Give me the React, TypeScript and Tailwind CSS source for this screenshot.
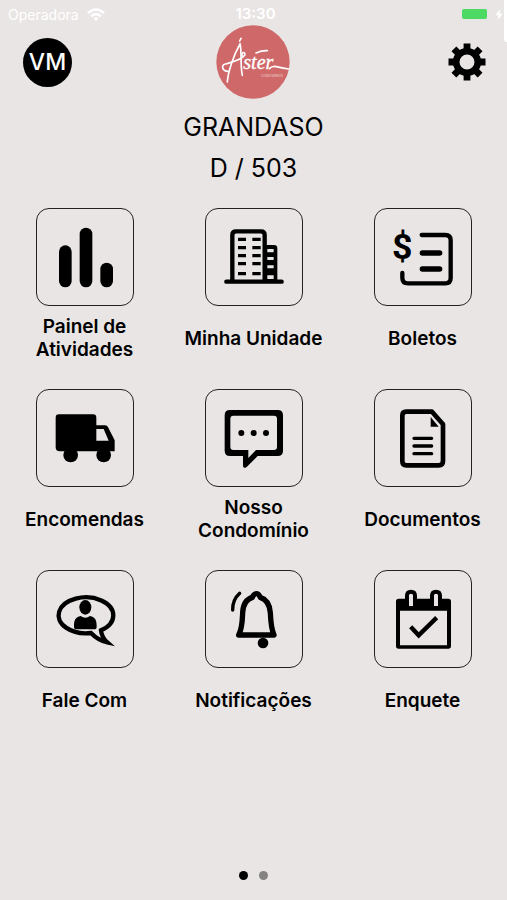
import type { ReactNode } from 'react'

type Tile = { label: string; href: string; icon: ReactNode }

const tiles: Tile[] = [
  {
    label: 'Painel de Atividades',
    href: '#painel',
    icon: (
      <g fill="currentColor">
        <rect x="102" y="137" width="38" height="126" rx="19" />
        <rect x="164" y="84" width="38" height="179" rx="19" />
        <rect x="226" y="189" width="38" height="74" rx="19" />
      </g>
    ),
  },
  {
    label: 'Minha Unidade',
    href: '#unidade',
    icon: (
      <>
        <path d="M115 245V106Q115 95 126 95H201Q212 95 212 106V245M97 246H263" fill="none" stroke="currentColor" strokeWidth="13" strokeLinecap="round" />
        <path d="M214 136H240Q250 136 250 146V246H214ZM220 148V158H239V148ZM220 172V181H239V172ZM220 197V206H239V197ZM220 227V238H239V227Z" fill="currentColor" fillRule="evenodd" />
        <path d="M132 119H156M175 119H200M132 144H156M175 144H200M132 168H156M175 168H200M132 192H156M175 192H200M132 222H156M175 222H200" fill="none" stroke="currentColor" strokeWidth="10" />
      </>
    ),
  },
  {
    label: 'Boletos',
    href: '#boletos',
    icon: (
      <>
        <path d="M176 106H247Q263 106 263 122V235Q263 251 247 251H135Q118 251 118 234V220" fill="none" stroke="currentColor" strokeWidth="13" strokeLinecap="round" />
        <path d="M178 160H230M178 208H230" fill="none" stroke="currentColor" strokeWidth="16" strokeLinecap="round" />
        <text x="118" y="179" textAnchor="middle" fontSize="107" fontWeight="700" fill="currentColor" className="font-['Roboto',sans-serif]">$</text>
      </>
    ),
  },
  {
    label: 'Encomendas',
    href: '#encomendas',
    icon: (
      <>
        <path d="M102 101H204Q214 101 214 111V134H240Q247 134 250 141L269 179V212H104Q92 212 92 200V111Q92 101 102 101ZM214 145V180H251L236 145Z" fill="currentColor" fillRule="evenodd" />
        <circle cx="137" cy="223" r="22" fill="currentColor" />
        <circle cx="236" cy="223" r="22" fill="currentColor" />
      </>
    ),
  },
  {
    label: 'Nosso Condomínio',
    href: '#condominio',
    icon: (
      <g fill="currentColor">
        <path d="M108 88H251Q267 88 267 104V210Q267 226 251 226H191L158 259Q147 266 147 254V226H108Q92 226 92 210V104Q92 88 108 88ZM118 105Q109 105 109 114V199Q109 208 118 208H163V232L186 208H240Q249 208 249 199V114Q249 105 240 105Z" fillRule="evenodd" />
        <circle cx="142" cy="157" r="9" />
        <circle cx="179" cy="157" r="9" />
        <circle cx="216" cy="157" r="9" />
      </g>
    ),
  },
  {
    label: 'Documentos',
    href: '#documentos',
    icon: (
      <>
        <path d="M130 93H207L240 131V241Q240 254 227 254H130Q118 254 118 242V105Q118 93 130 93Z" fill="none" stroke="currentColor" strokeWidth="14" strokeLinejoin="round" />
        <path d="M203 109L227 138H203Z" fill="currentColor" />
        <path d="M153 173H206M153 196H206M153 219H206" fill="none" stroke="currentColor" strokeWidth="10" strokeLinecap="round" />
      </>
    ),
  },
  {
    label: 'Fale Com',
    href: '#fale-com',
    icon: (
      <>
        <path d="M198 214A82 54 0 1 1 228 206Q230 227 247 242Q219 236 198 214Z" fill="none" stroke="currentColor" strokeWidth="13" strokeLinejoin="miter" />
        <ellipse cx="181" cy="137" rx="18" ry="22" fill="currentColor" />
        <path d="M147 195C147 175 151 167 167 163Q181 173 195 163C211 167 215 175 215 195Q215 203 207 203H155Q147 203 147 195Z" fill="currentColor" />
      </>
    ),
  },
  {
    label: 'Notificações',
    href: '#notificacoes',
    icon: (
      <>
        <path d="M134 220C145 200 145 176 146 153C147 127 156 113 175 107Q180 96 187 96Q194 96 199 107C218 113 227 127 229 153C230 176 231 200 240 220Z" fill="none" stroke="currentColor" strokeWidth="16" strokeLinejoin="round" />
        <circle cx="207" cy="244" r="16" fill="currentColor" />
        <path d="M137 95Q115 115 116 145" fill="none" stroke="currentColor" strokeWidth="10" strokeLinecap="round" />
      </>
    ),
  },
  {
    label: 'Enquete',
    href: '#enquete',
    icon: (
      <>
        <path d="M107 111H126V102Q126 84 144 84Q162 84 162 102V111H201V102Q201 84 219 84Q237 84 237 102V111H256Q264 111 264 119V253Q264 261 256 261H107Q99 261 99 253V119Q99 111 107 111ZM111 147V251H252V147ZM138 101V133H150V101Q150 96 144 96Q138 96 138 101ZM213 101V133H225V101Q225 96 219 96Q213 96 213 101Z" fill="currentColor" fillRule="evenodd" />
        <path d="M143 195L167 221L221 168" fill="none" stroke="currentColor" strokeWidth="13" />
      </>
    ),
  },
]

function StatusBar() {
  return (
    <div className="grid h-7 grid-cols-3 items-center pl-2 pr-1 text-[15px] text-white">
      <div className="flex items-center gap-2">
        <span className="text-[14px]">Operadora</span>
        <svg viewBox="0 0 18 13" className="h-[13px] w-[18px]" fill="none" stroke="currentColor" strokeWidth="2.6">
          <path d="M1 5Q9 -2 17 5M4 8.2Q9 4 14 8.2" />
          <path d="M6.4 10.2Q9 8.4 11.6 10.2L9 13Z" fill="currentColor" stroke="none" />
        </svg>
      </div>
      <span className="text-center font-semibold">13:30</span>
      <div className="flex items-center justify-end gap-2">
        <span className="h-[10px] w-[25px] rounded-[2px] bg-[#4cd964]" />
        <svg viewBox="0 0 8 12" className="h-[11px] w-2" fill="currentColor">
          <path d="M5.5 0L0 6.8H3.4L2.5 12L8 5.2H4.6Z" />
        </svg>
      </div>
    </div>
  )
}

function Logo() {
  return (
    <svg viewBox="0 0 222 222" className="h-[74px] w-[74px]" role="img" aria-label="Áster">
      <circle cx="111" cy="111" r="110" fill="#cf6869" />
      <g fill="none" stroke="#fff" strokeWidth="5" strokeLinecap="round">
        <path d="M71 48L75 40" />
        <path d="M34 171C36 142 52 92 72 57C78 72 72 122 79 151" />
        <path d="M36 139C20 139 13 121 28 117C52 110 74 107 86 91C90 80 76 80 78 91" />
        <path d="M120 84Q138 76 154 77" />
        <path d="M160 131C172 117 186 129 219 132" />
      </g>
      <text x="82" y="132" fontSize="60" fontStyle="italic" fill="#fff" stroke="#fff" strokeWidth="1" className="font-['Liberation_Serif',serif]">ster</text>
      <text x="135" y="157" fontSize="9" fill="#f3d3d2">CONDOMÍNIOS</text>
    </svg>
  )
}

function Gear() {
  return (
    <svg viewBox="-19 -19 38 38" className="h-[38px] w-[38px]">
      <circle r="10.8" fill="none" stroke="currentColor" strokeWidth="6.6" />
      {[0, 45, 90, 135].map((angle) => (
        <path key={angle} transform={`rotate(${angle})`} d="M-3.4 -18.5H3.4V-12H-3.4ZM-3.4 12H3.4V18.5H-3.4Z" fill="currentColor" />
      ))}
    </svg>
  )
}

export default function App() {
  return (
    <div className="relative flex min-h-screen flex-col bg-[#e9e5e4] font-['Inter',sans-serif] text-black">
      <StatusBar />
      <div className="absolute right-0 top-0 h-[42px] w-[3px] rounded-bl bg-white" />

      <header className="-mt-[3px] grid grid-cols-3 items-center px-5">
        <button type="button" aria-label="Perfil" className="ml-[3px] flex h-[49px] w-[49px] items-center justify-center rounded-full bg-black text-[23px] font-medium text-white">
          VM
        </button>
        <div className="flex justify-center"><Logo /></div>
        <button type="button" aria-label="Configurações" className="mr-px justify-self-end"><Gear /></button>
      </header>

      <div className="mt-2 text-center text-[25px] leading-[41px]">
        <h1>GRANDASO</h1>
        <p>D / 503</p>
      </div>

      <nav className="mt-[19px] grid grid-cols-3 gap-y-7">
        {tiles.map(({ label, href, icon }) => (
          <a key={label} href={href} className="flex flex-col items-center gap-[9px]">
            <span className="h-[98px] w-[98px] rounded-[13px] border border-[#222]">
              <svg viewBox="36 28 288 288" className="h-full w-full">{icon}</svg>
            </span>
            <span className="flex h-[46px] w-[150px] items-center justify-center text-center text-[19px] font-semibold leading-[23px]">
              {label}
            </span>
          </a>
        ))}
      </nav>

      <div className="mt-auto flex justify-center gap-[11px] pb-5">
        <span className="h-[9px] w-[9px] rounded-full bg-black" />
        <span className="h-[9px] w-[9px] rounded-full bg-[#858283]" />
      </div>
    </div>
  )
}
